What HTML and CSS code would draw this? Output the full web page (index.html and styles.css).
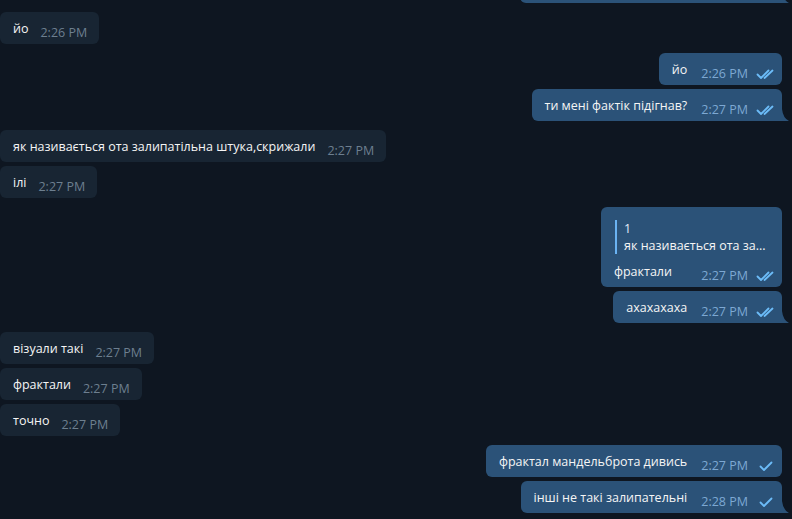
FILE: index.html
```html
<!DOCTYPE html>
<html lang="uk">

<head>
    <meta charset="UTF-8">
    <meta name="viewport" content="width=device-width, initial-scale=1.0">
    <title>Chat</title>

    <!-- CSS styling -->
    <link rel="stylesheet" href="styles.css">
</head>

<body>
    <!-- chat history, newest at the bottom -->
    <div class="chat">
        <div class="row out">
            <div class="bubble tail cut">
                <svg class="tail-shape" viewBox="0 0 7 12"><path d="M0 0 Q1 9 7 12 H0 Z"/></svg>
            </div>
        </div>

        <div class="row in group">
            <div class="bubble">
                <span class="text">йо</span>
                <span class="meta">2:26 PM</span>
            </div>
        </div>

        <div class="row out group">
            <div class="bubble">
                <span class="text">йо</span>
                <span class="meta">2:26 PM
                    <svg class="check" viewBox="0 0 18 11"><path d="M1.5 5.5 L5 9 L12.5 1.5 M8.5 9 L16.5 1.5"/></svg>
                </span>
            </div>
        </div>
        <div class="row out">
            <div class="bubble tail">
                <span class="text">ти мені фактік підігнав?</span>
                <span class="meta">2:27 PM
                    <svg class="check" viewBox="0 0 18 11"><path d="M1.5 5.5 L5 9 L12.5 1.5 M8.5 9 L16.5 1.5"/></svg>
                </span>
                <svg class="tail-shape" viewBox="0 0 7 12"><path d="M0 0 Q1 9 7 12 H0 Z"/></svg>
            </div>
        </div>

        <div class="row in group">
            <div class="bubble">
                <span class="text">як називається ота залипатільна штука,скрижали</span>
                <span class="meta">2:27 PM</span>
            </div>
        </div>
        <div class="row in">
            <div class="bubble">
                <span class="text">ілі</span>
                <span class="meta">2:27 PM</span>
            </div>
        </div>

        <div class="row out group">
            <div class="bubble reply-bubble">
                <div class="reply">
                    <div class="reply-name">1</div>
                    <div class="reply-text">як називається ота за...</div>
                </div>
                <div class="line">
                    <span class="text">фрактали</span>
                    <span class="meta">2:27 PM
                        <svg class="check" viewBox="0 0 18 11"><path d="M1.5 5.5 L5 9 L12.5 1.5 M8.5 9 L16.5 1.5"/></svg>
                    </span>
                </div>
            </div>
        </div>
        <div class="row out">
            <div class="bubble tail">
                <span class="text">ахахахаха</span>
                <span class="meta">2:27 PM
                    <svg class="check" viewBox="0 0 18 11"><path d="M1.5 5.5 L5 9 L12.5 1.5 M8.5 9 L16.5 1.5"/></svg>
                </span>
                <svg class="tail-shape" viewBox="0 0 7 12"><path d="M0 0 Q1 9 7 12 H0 Z"/></svg>
            </div>
        </div>

        <div class="row in group">
            <div class="bubble">
                <span class="text">візуали такі</span>
                <span class="meta">2:27 PM</span>
            </div>
        </div>
        <div class="row in">
            <div class="bubble">
                <span class="text">фрактали</span>
                <span class="meta">2:27 PM</span>
            </div>
        </div>
        <div class="row in">
            <div class="bubble">
                <span class="text">точно</span>
                <span class="meta">2:27 PM</span>
            </div>
        </div>

        <div class="row out group">
            <div class="bubble">
                <span class="text">фрактал мандельброта дивись</span>
                <span class="meta">2:27 PM
                    <svg class="check" viewBox="0 0 18 11"><path d="M4.5 5.5 L8 9 L15.5 1.5"/></svg>
                </span>
            </div>
        </div>
        <div class="row out">
            <div class="bubble tail">
                <span class="text">інші не такі залипательні</span>
                <span class="meta">2:28 PM
                    <svg class="check" viewBox="0 0 18 11"><path d="M4.5 5.5 L8 9 L15.5 1.5"/></svg>
                </span>
                <svg class="tail-shape" viewBox="0 0 7 12"><path d="M0 0 Q1 9 7 12 H0 Z"/></svg>
            </div>
        </div>
    </div>
</body>

</html>
```

FILE: styles.css
```css
/* Page */
body {
    margin: 0;
    background-color: #0e1621;
    font-family: "Open Sans", "Noto Sans", sans-serif;
    color: #f5f5f5;
}

/* Chat column, newest message sticks to the bottom */
.chat {
    height: 519px;
    box-sizing: border-box;
    display: flex;
    flex-direction: column;
    justify-content: flex-end;
    overflow: hidden;
    padding: 0 10px 6px 0;
}

/* One message per row */
.row {
    display: flex;
    margin-top: 4px;
    flex-shrink: 0;
}

.row.group {
    margin-top: 9px;
}

.row.out {
    justify-content: flex-end;
}

/* Bubbles */
.bubble {
    position: relative;
    display: flex;
    align-items: flex-start;
    padding: 6px 12px 6px 13px;
    border-radius: 6px;
    background-color: #182533;
    font-size: 12.5px;
    line-height: 20px;
}

.text {
    position: relative;
    top: 1px;
}

.out .bubble {
    background-color: #2b5278;
    padding-right: 8px;
}

.bubble.tail {
    border-bottom-right-radius: 0;
}

.bubble.cut {
    width: 262px;
    height: 32px;
    box-sizing: border-box;
}

.tail-shape {
    position: absolute;
    right: -7px;
    bottom: 0;
    width: 7px;
    height: 12px;
    fill: #2b5278;
}

/* Time and read marks */
.meta {
    display: flex;
    align-items: center;
    gap: 8px;
    height: 20px;
    margin-left: 12px;
    font-size: 12.5px;
    color: #6d7f8f;
    position: relative;
    top: 5px;
    white-space: nowrap;
}

.out .meta {
    color: #7da8d3;
    margin-left: 14px;
}

.check {
    width: 18px;
    height: 11px;
    fill: none;
    stroke: #6cbcf8;
    stroke-width: 1.8;
    stroke-linecap: round;
    stroke-linejoin: round;
}

/* Reply header inside a bubble */
.reply-bubble {
    flex-direction: column;
    align-items: stretch;
    width: 181px;
    box-sizing: border-box;
    padding-top: 13px;
}

.reply {
    border-left: 2px solid #6ab3f3;
    margin-left: 1px;
    padding-left: 7px;
    margin-bottom: 7px;
    line-height: 17px;
}

.reply-name {
    color: #e4eef8;
}

.reply-text {
    white-space: nowrap;
}

.line {
    display: flex;
    align-items: flex-start;
    justify-content: space-between;
}
```
